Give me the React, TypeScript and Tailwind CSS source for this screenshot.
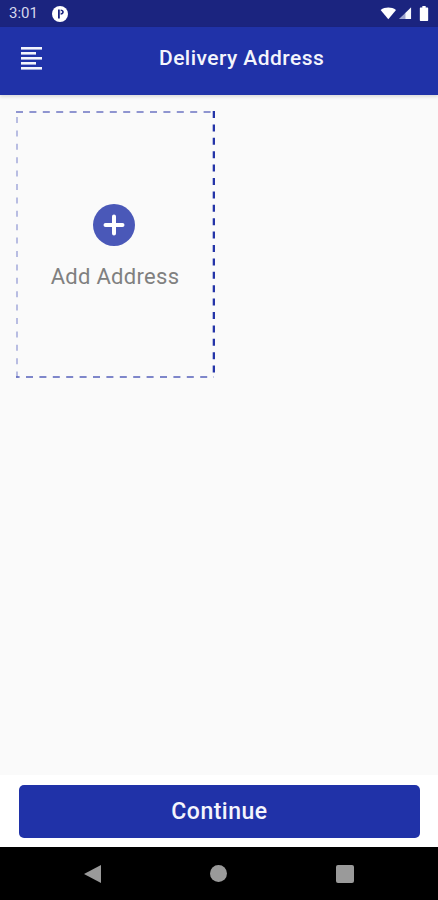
import React from "react";

const font = { fontFamily: '"Roboto", "Liberation Sans", sans-serif' };

function StatusIcons() {
  return (
    <div className="flex items-center">
      <svg width="17" height="13" viewBox="0 0 18 14">
        <path d="M0.5 3.2C3 1.2 5.8 0.5 8.8 0.5s5.8 0.7 8.3 2.7L8.8 13.2z" fill="#fff" />
      </svg>
      <svg width="14" height="13" viewBox="0 0 14 14" className="ml-[1px]">
        <path d="M13.5 0.5V13H0.5z" fill="#9fa5cf" />
        <path d="M13.5 0.5V13H7.5V6.5z" fill="#fff" fillOpacity="0.9" />
      </svg>
      <svg width="10" height="15" viewBox="0 0 12 16" className="ml-[7px] mr-[1px]" preserveAspectRatio="none">
        <path d="M4 0h4v1.5h2.2c.5 0 .8.3.8.8v12.9c0 .5-.3.8-.8.8H1.8c-.5 0-.8-.3-.8-.8V2.3c0-.5.3-.8.8-.8H4z" fill="#fff" />
      </svg>
    </div>
  );
}

export default function App() {
  return (
    <div className="flex flex-col h-[900px] w-[438px] bg-[#fafafa] overflow-hidden" style={font}>
      <div className="h-[27px] bg-[#1b247f] flex items-center justify-between pl-[9px] pr-[8px] shrink-0">
        <div className="flex items-center gap-[14px]">
          <span className="text-[15px] text-[#d5d7ec] leading-none">3:01</span>
          <svg width="16" height="16" viewBox="0 0 16 16">
            <circle cx="8" cy="8" r="8" fill="#fff" />
            <path d="M6 3.5h1.8v9H6z" fill="#1b247f" />
            <path d="M8.6 3.5c2 0 3.2 1 3.2 2.6S10.6 8.7 8.6 8.7z" fill="#1b247f" />
            <circle cx="9.2" cy="6" r="1" fill="#fff" />
          </svg>
        </div>
        <StatusIcons />
      </div>

      <header className="h-[68px] bg-[#2032a8] relative flex items-center pl-[159px] shrink-0 shadow-[0_2px_3px_rgba(0,0,0,0.12)] z-10">
        <svg width="22" height="24" viewBox="0 0 22 24" className="absolute left-[21px] top-[20px]">
          <g fill="#f2f4fc">
            <rect x="0" y="0" width="21" height="2.6" />
            <rect x="0" y="5" width="15" height="2.6" />
            <rect x="0" y="10" width="21" height="2.6" />
            <rect x="0" y="15" width="15" height="2.6" />
            <rect x="0" y="20" width="21" height="2.6" />
          </g>
        </svg>
        <h1 className="text-[21px] font-medium text-[#f4f5fc] leading-none tracking-[0.45px] -mt-[5px]">
          Delivery Address
        </h1>
      </header>

      <main className="flex-1 pl-[16px] pt-[16px]">
        <div className="relative w-[199px] h-[267px] flex flex-col items-center pt-[93px]">
          <svg width="199" height="267" viewBox="0 0 199 267" className="absolute inset-0">
            <line x1="0" y1="1" x2="198" y2="1" stroke="#6c74c2" strokeWidth="1.6" strokeDasharray="7 6.4" />
            <line x1="1" y1="0" x2="1" y2="267" stroke="#a9aedd" strokeWidth="1.6" strokeDasharray="6 7.4" strokeDashoffset="-6" />
            <line x1="198" y1="0" x2="198" y2="267" stroke="#2434a8" strokeWidth="2.6" strokeDasharray="7 6.4" />
            <line x1="0" y1="266" x2="198" y2="266" stroke="#5560ba" strokeWidth="1.6" strokeDasharray="7 6.4" strokeDashoffset="-10" />
          </svg>
          <div className="w-[42px] h-[42px] mr-[3px] rounded-full bg-[#4a58b8] flex items-center justify-center">
            <svg width="22" height="22" viewBox="0 0 22 22">
              <path d="M11 2.5v17M2.5 11h17" stroke="#fff" strokeWidth="4" strokeLinecap="round" />
            </svg>
          </div>
          <span className="mt-[18px] mr-[1px] text-[22px] text-[#808080] leading-[26px] tracking-[0.3px]">Add Address</span>
        </div>
      </main>

      <div className="h-[72px] bg-white shrink-0 pl-[19px] pr-[18px] pt-[10px]">
        <button className="w-full h-[53px] pt-[2px] rounded-[5px] bg-[#2032a8] text-[#f4f5fc] text-[23px] font-medium tracking-[0.5px]">
          Continue
        </button>
      </div>

      <nav className="h-[53px] bg-black shrink-0 flex items-center justify-between pl-[84px] pr-[84px]">
        <svg width="17" height="18" viewBox="0 0 17 18">
          <path d="M17 0v18L0 9z" fill="#9a9a9a" />
        </svg>
        <div className="w-[17px] h-[17px] rounded-full bg-[#9a9a9a]" />
        <div className="w-[18px] h-[18px] rounded-[2px] bg-[#9a9a9a]" />
      </nav>
    </div>
  );
}
